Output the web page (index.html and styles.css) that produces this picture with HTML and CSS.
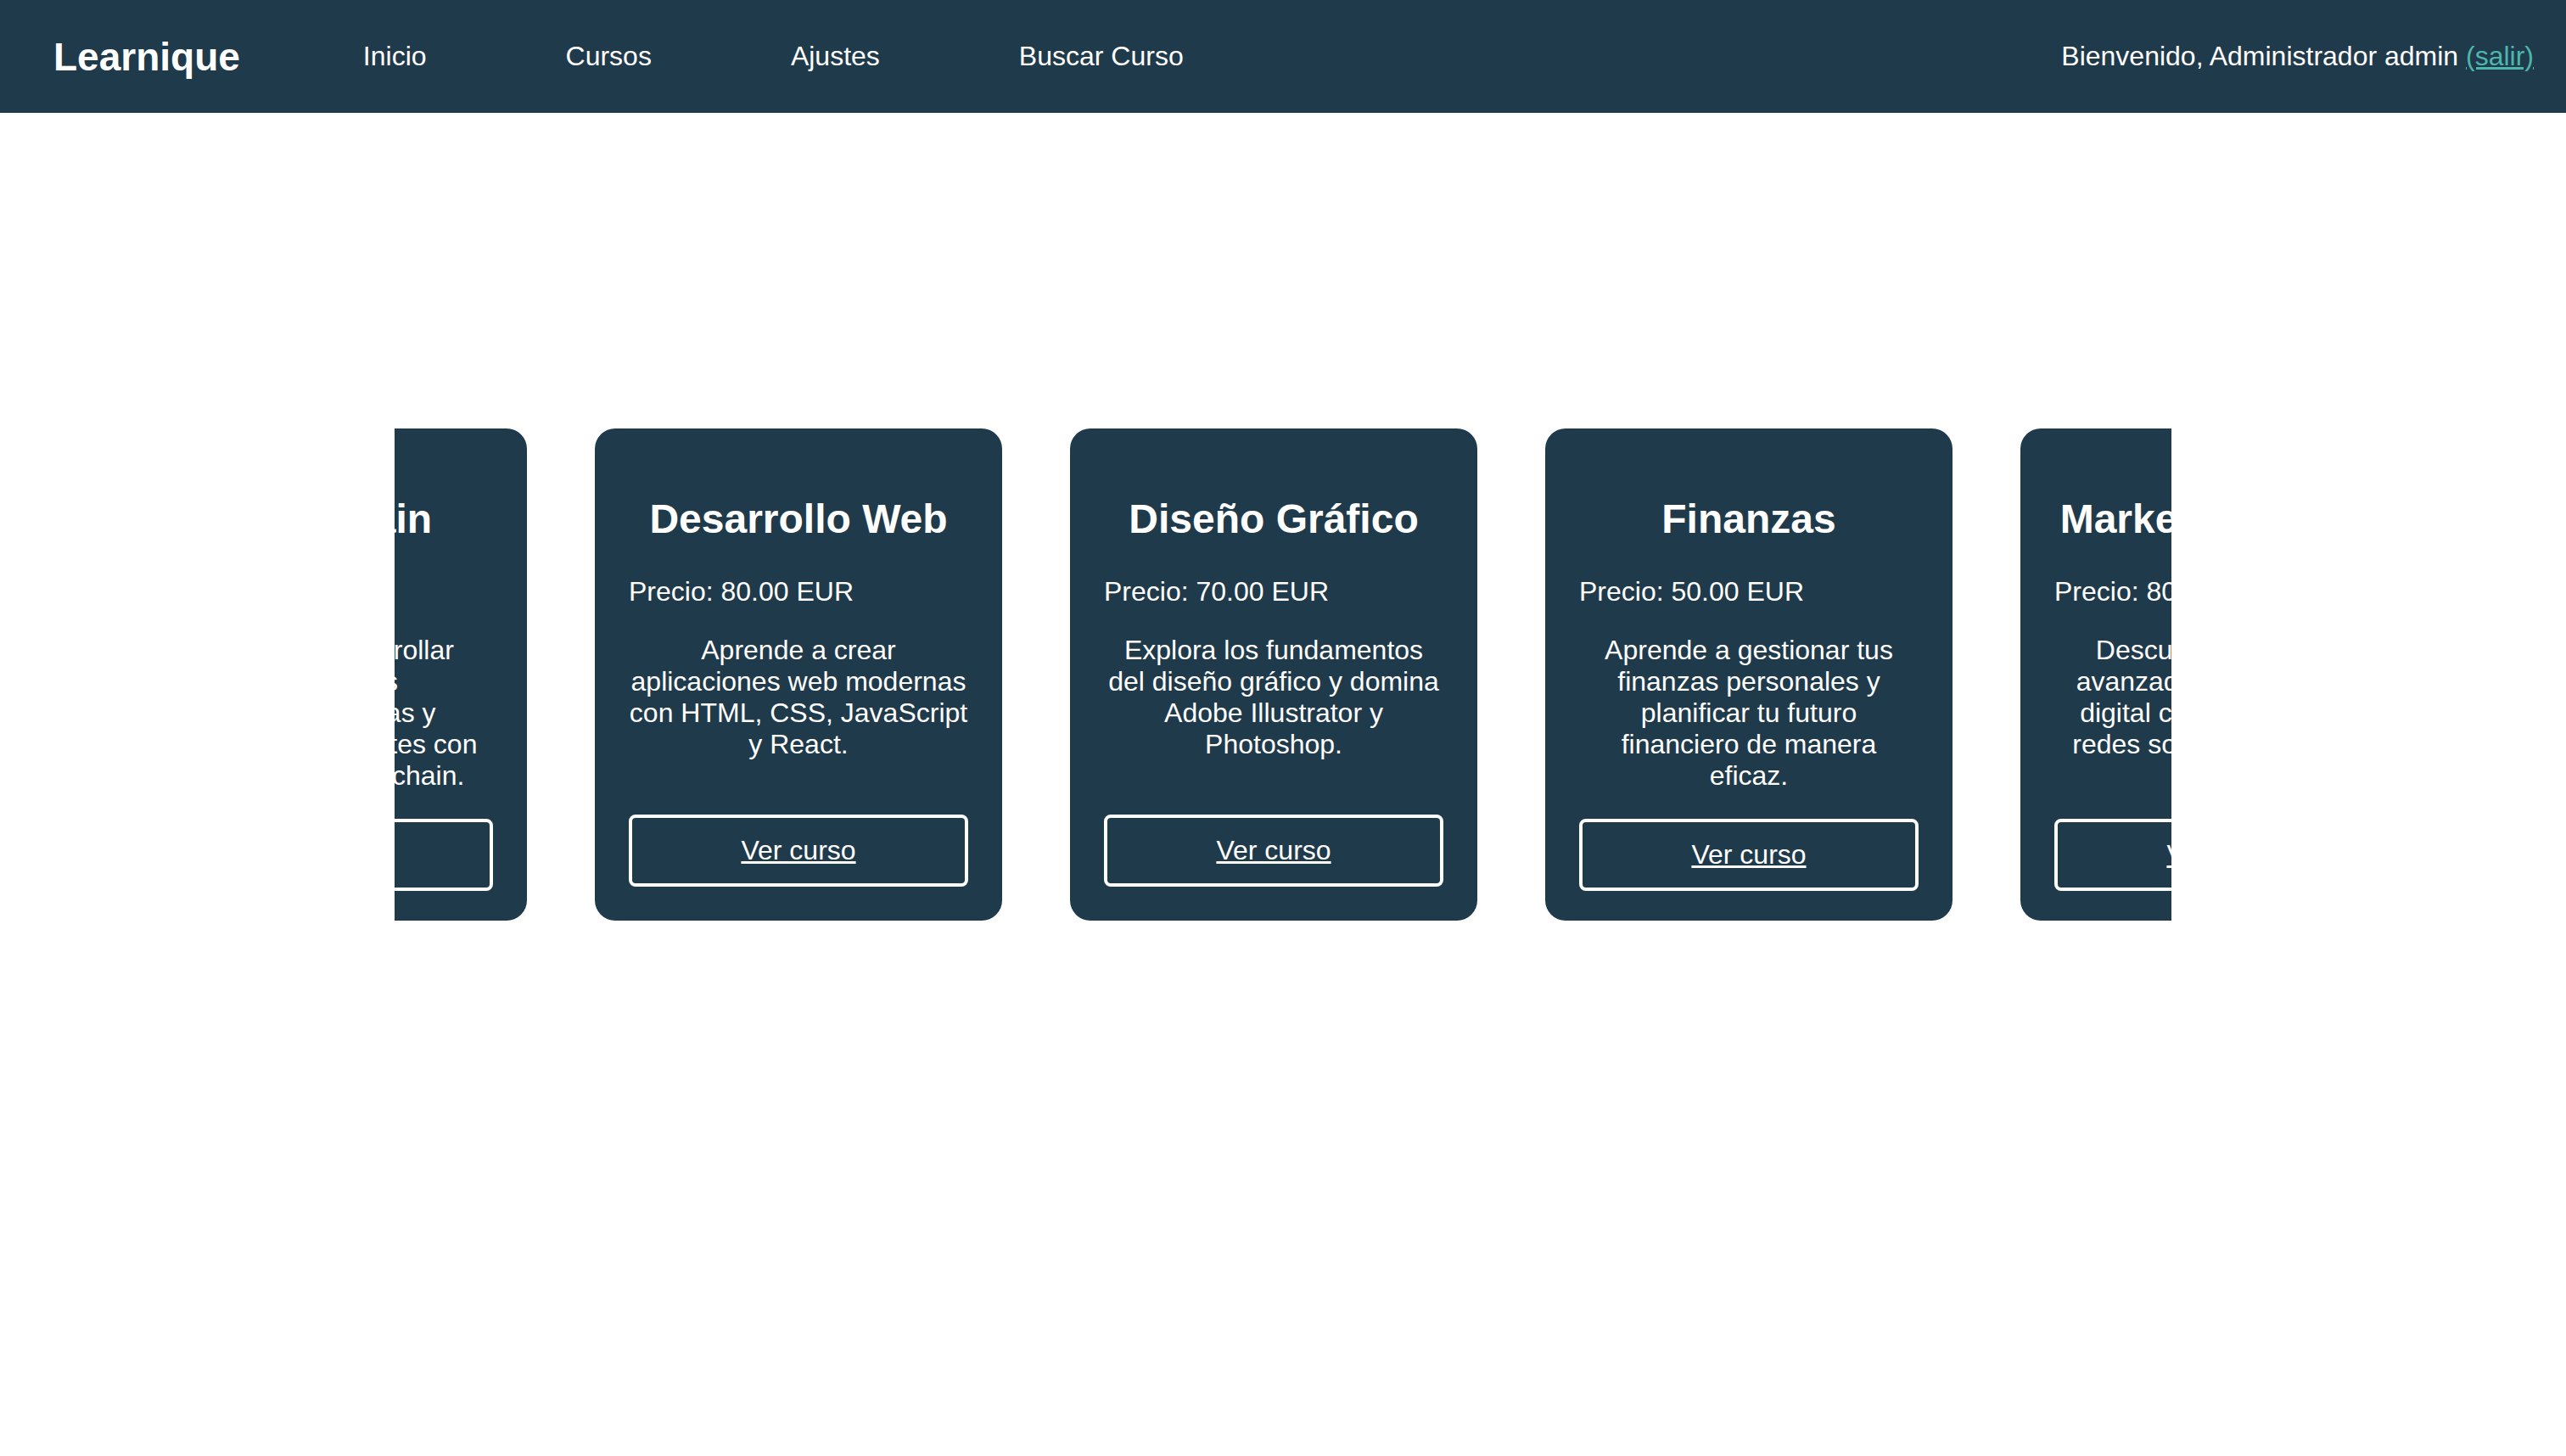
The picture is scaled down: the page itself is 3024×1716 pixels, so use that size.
FILE: index.html
```html
<!DOCTYPE html>
<html lang="es">
<head>
<meta charset="utf-8">
<title>Learnique</title>
<link rel="stylesheet" href="styles.css">
</head>
<body>
<header class="topbar">
  <div class="logo">Learnique</div>
  <nav class="nav">
    <a href="#">Inicio</a>
    <a href="#">Cursos</a>
    <a href="#">Ajustes</a>
    <a href="#">Buscar Curso</a>
  </nav>
  <div class="welcome">Bienvenido, Administrador admin <a href="#" class="logout">(salir)</a></div>
</header>
<main class="main">
  <section class="carousel">
    <div class="track">
      <article class="card">
        <h2 class="card-title">Blockchain</h2>
        <p class="price">Precio: 90.00 EUR</p>
        <p class="desc">Aprende a desarrollar aplicaciones descentralizadas y contratos inteligentes con tecnologías blockchain.</p>
        <a href="#" class="btn">Ver curso</a>
      </article>
      <article class="card">
        <h2 class="card-title">Desarrollo Web</h2>
        <p class="price">Precio: 80.00 EUR</p>
        <p class="desc">Aprende a crear aplicaciones web modernas con HTML, CSS, JavaScript y React.</p>
        <a href="#" class="btn">Ver curso</a>
      </article>
      <article class="card">
        <h2 class="card-title">Diseño Gráfico</h2>
        <p class="price">Precio: 70.00 EUR</p>
        <p class="desc">Explora los fundamentos del diseño gráfico y domina Adobe Illustrator y Photoshop.</p>
        <a href="#" class="btn">Ver curso</a>
      </article>
      <article class="card">
        <h2 class="card-title">Finanzas</h2>
        <p class="price">Precio: 50.00 EUR</p>
        <p class="desc">Aprende a gestionar tus finanzas personales y planificar tu futuro financiero de manera eficaz.</p>
        <a href="#" class="btn">Ver curso</a>
      </article>
      <article class="card">
        <h2 class="card-title">Marketing Digital</h2>
        <p class="price">Precio: 80.00 EUR</p>
        <p class="desc">Descubre estrategias avanzadas de marketing digital con herramientas redes sociales y analítica web.</p>
        <a href="#" class="btn">Ver curso</a>
      </article>
    </div>
  </section>
</main>
</body>
</html>
```

FILE: styles.css
```css
html, body {
  margin: 0;
  padding: 0;
  background: #ffffff;
}

body {
  font-family: "Liberation Sans", Arial, Helvetica, sans-serif;
  font-size: 32px;
  color: #ffffff;
}

.topbar {
  display: flex;
  align-items: center;
  height: 133px;
  padding: 0 38px 0 63px;
  background: #1f3a4b;
}

.logo {
  font-size: 46px;
  font-weight: bold;
  color: #ffffff;
}

.nav {
  display: flex;
  gap: 164px;
  margin-left: 145px;
}

.nav a {
  color: #ffffff;
  text-decoration: none;
  font-size: 32px;
}

.welcome {
  margin-left: auto;
  font-size: 32px;
  color: #ffffff;
}

.logout {
  color: #4db6ac;
  text-decoration: underline;
}

.main {
  padding-top: 372px;
}

.carousel {
  width: 2094px;
  margin: 0 auto;
  overflow: hidden;
}

.track {
  display: flex;
  gap: 80px;
  transform: translateX(-324px);
}

.card {
  flex: 0 0 480px;
  height: 580px;
  box-sizing: border-box;
  padding: 40px;
  border-radius: 24px;
  background: #1f3a4b;
  display: flex;
  flex-direction: column;
}

.card-title {
  margin: 39px 0 40px;
  font-size: 48px;
  font-weight: bold;
  text-align: center;
  white-space: nowrap;
}

.price {
  margin: 0;
  text-align: left;
  white-space: nowrap;
}

.desc {
  margin: 32px 0;
  text-align: center;
}

.btn {
  margin-top: auto;
  flex-shrink: 0;
  display: block;
  padding: 20px;
  border: 4px solid #ffffff;
  border-radius: 8px;
  color: #ffffff;
  text-align: center;
  text-decoration: underline;
}
```
